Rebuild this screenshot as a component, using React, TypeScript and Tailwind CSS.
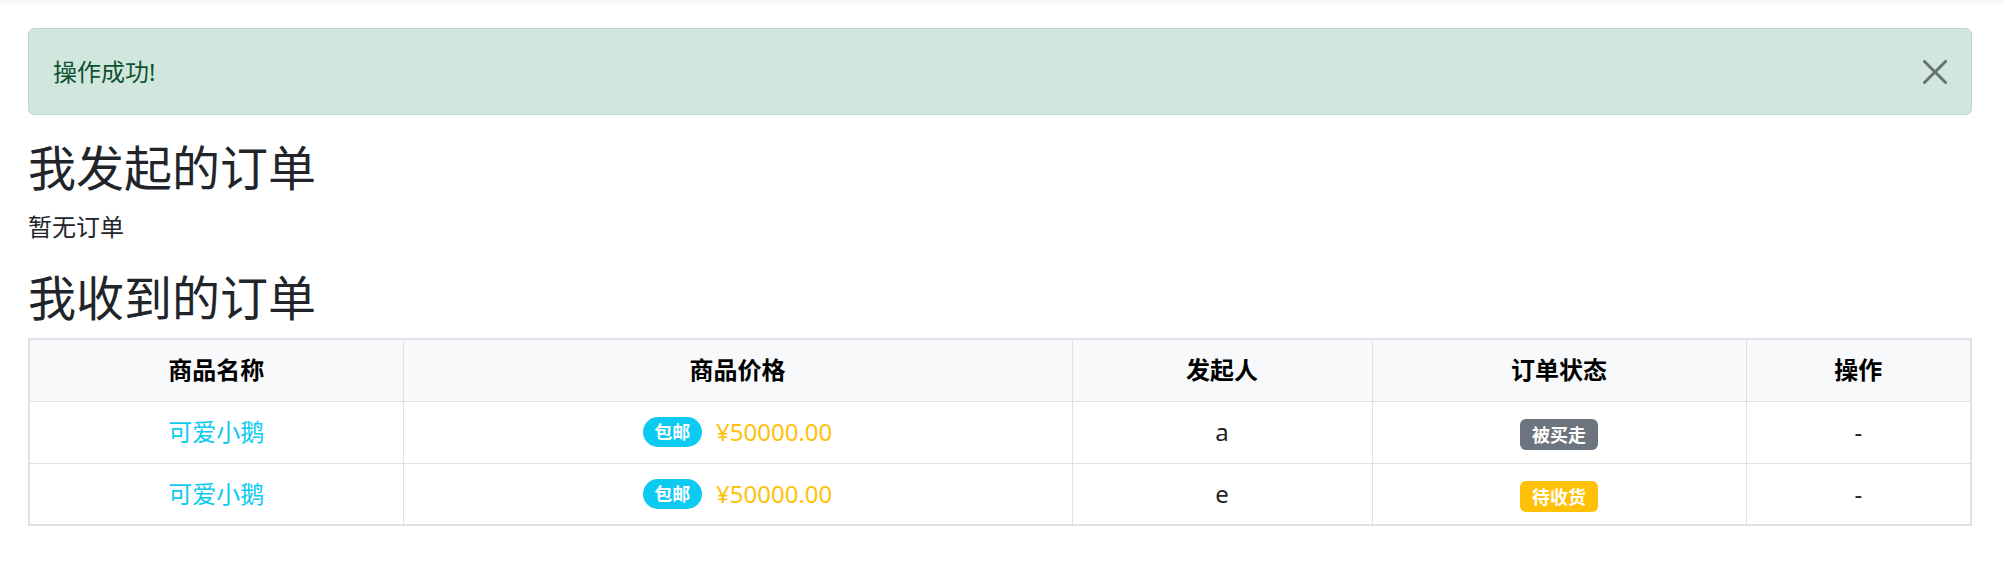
import React from 'react';

type Order = {
  name: string;
  price: string;
  buyer: string;
  status: string;
  statusClass: string;
};

const orders: Order[] = [
  { name: '可爱小鹅', price: '¥50000.00', buyer: 'a', status: '被买走', statusClass: 'bg-[#6c757d]' },
  { name: '可爱小鹅', price: '¥50000.00', buyer: 'e', status: '待收货', statusClass: 'bg-[#ffc107]' },
];

const CloseIcon = () => (
  <svg viewBox="0 0 16 16" className="h-[24px] w-[24px]" fill="#000" fillOpacity={0.5}>
    <path d="M.293.293a1 1 0 0 1 1.414 0L8 6.586 14.293.293a1 1 0 1 1 1.414 1.414L9.414 8l6.293 6.293a1 1 0 0 1-1.414 1.414L8 9.414l-6.293 6.293a1 1 0 0 1-1.414-1.414L6.586 8 .293 1.707a1 1 0 0 1 0-1.414z" />
  </svg>
);

export default function App() {
  return (
    <div className="min-h-screen bg-white font-['Noto_Sans','Noto_Sans_CJK_SC',sans-serif] text-[24px] leading-[36px] text-[#212529]">
      <div className="h-[4px] bg-[#f8f9fa]" />
      <div className="pl-[28px] pr-[32px]">
        {/* alert */}
        <div className="relative mt-[24px] mb-[24px] rounded-[6px] border-[1.5px] border-[#badbcc] bg-[#d1e7dd] py-[24.5px] pl-[24px] pr-[96px] text-[#0f5132]">
          操作成功!
          <button className="absolute right-[24px] top-1/2 -translate-y-1/2 flex items-center justify-center">
            <CloseIcon />
          </button>
        </div>

        <h2 className="mb-[12px] text-[48px] leading-[57.6px] font-normal">我发起的订单</h2>
        <p className="mb-[24px]">暂无订单</p>

        <h2 className="mb-[12px] text-[48px] leading-[57.6px] font-normal">我收到的订单</h2>
        <table className="w-full table-fixed border-collapse border-2 border-[#dee2e6] text-center">
          <colgroup>
            <col className="w-[374px]" />
            <col className="w-[669px]" />
            <col className="w-[300px]" />
            <col className="w-[374px]" />
            <col />
          </colgroup>
          <thead>
            <tr className="h-[62px] bg-[#f8f9fa] text-black">
              {['商品名称', '商品价格', '发起人', '订单状态', '操作'].map((h) => (
                <th key={h} className="border border-[#dee2e6] px-[12px] font-bold align-middle">
                  {h}
                </th>
              ))}
            </tr>
          </thead>
          <tbody>
            {orders.map((o, i) => (
              <tr key={i} className="h-[62px]">
                <td className="border border-[#dee2e6] px-[12px] align-middle text-[#0dcaf0]">{o.name}</td>
                <td className="border border-[#dee2e6] px-[12px] align-middle">
                  <div className="flex items-center justify-center gap-[14px]">
                    <span className="rounded-full bg-[#0dcaf0] px-[11.7px] py-[6.3px] text-[18px] leading-[18px] font-bold text-white">
                      包邮
                    </span>
                    <span className="text-[#ffc107]">{o.price}</span>
                  </div>
                </td>
                <td className="border border-[#dee2e6] px-[12px] align-middle">{o.buyer}</td>
                <td className="border border-[#dee2e6] px-[12px] align-middle">
                  <span className={`inline-block rounded-[6px] px-[11.7px] py-[6.3px] align-middle text-[18px] leading-[18px] font-bold text-white ${o.statusClass}`}>
                    {o.status}
                  </span>
                </td>
                <td className="border border-[#dee2e6] px-[12px] align-middle">-</td>
              </tr>
            ))}
          </tbody>
        </table>
      </div>
    </div>
  );
}
